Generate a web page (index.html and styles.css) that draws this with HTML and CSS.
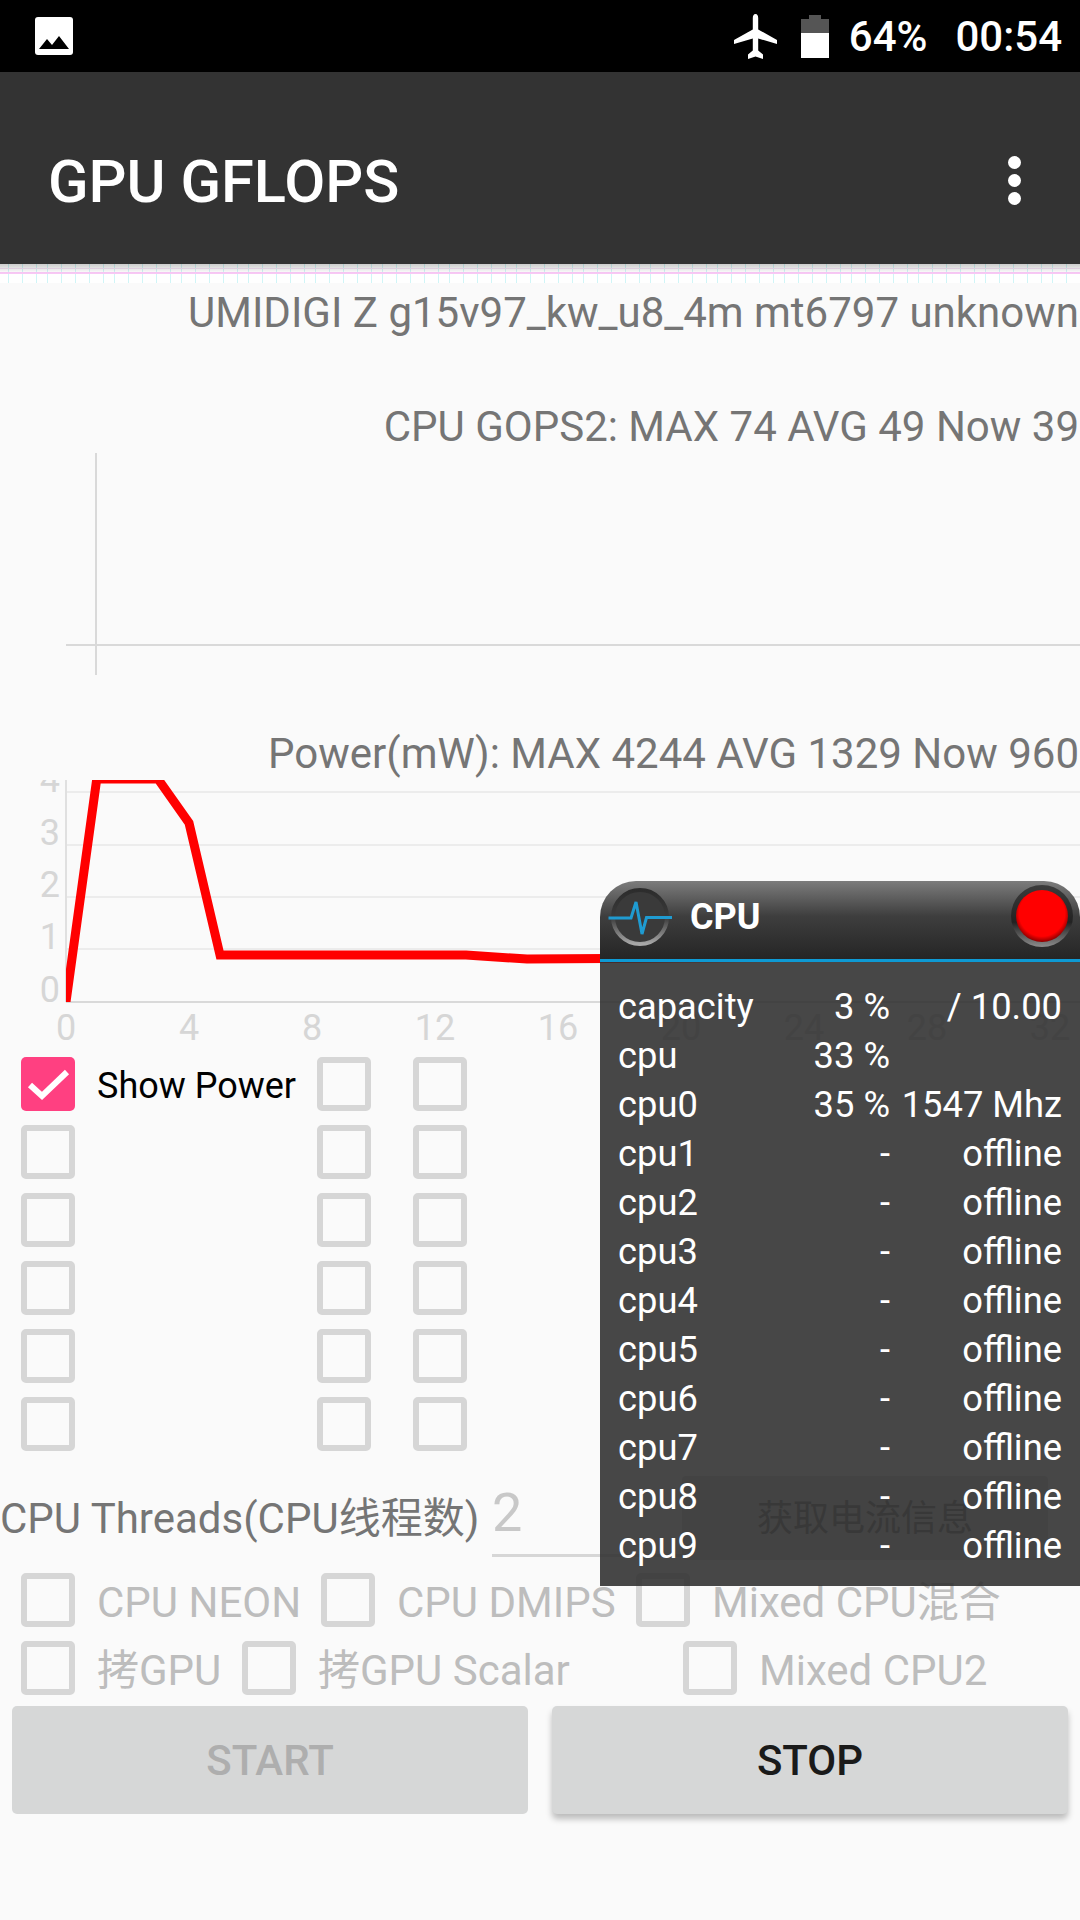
FILE: index.html
```html
<!DOCTYPE html>
<html lang="zh-CN">
<head>
    <meta charset="UTF-8">
    <meta name="viewport" content="width=device-width, initial-scale=1.0">
    <title>GPU GFLOPS</title>
    <link rel="stylesheet" href="styles.css">
</head>
<body>
    <div class="statusbar">
        <svg class="icon-picture" width="38" height="38" viewBox="0 0 38 38">
            <rect width="38" height="38" rx="3" fill="#fff"/>
            <path d="M4 32 L12 22 L17 28 L24 19 L34 32 Z" fill="#000"/>
        </svg>
        <div class="status-right">
            <svg class="icon-plane" width="43" height="45" viewBox="0 0 43 45">
                <path d="M21.5 0 C19.6 0 18.8 2 18.8 4 L18.8 15.5 L0 26 L0 30 L18.8 24.5 L18.8 36.5 L14 40.5 L14 45 L21.5 42.5 L29 45 L29 40.5 L24.2 36.5 L24.2 24.5 L43 30 L43 26 L24.2 15.5 L24.2 4 C24.2 2 23.4 0 21.5 0 Z" fill="#fff"/>
            </svg>
            <svg class="icon-battery" width="28" height="43" viewBox="0 0 28 43">
                <path d="M8 0 H20 V4 H28 V18 H0 V4 H8 Z" fill="#555"/>
                <rect y="18" width="28" height="25" fill="#fff"/>
            </svg>
            <span class="status-pct">64%</span>
            <span class="status-time">00:54</span>
        </div>
    </div>

    <div class="appbar">
        <span class="app-title">GPU GFLOPS</span>
        <div class="menu-dots"><i></i><i></i><i></i></div>
    </div>
    <div class="hatch"></div>

    <p class="device-line">UMIDIGI Z g15v97_kw_u8_4m mt6797 unknown</p>
    <p class="chart-title cpu-title">CPU GOPS2: MAX 74 AVG 49 Now 39</p>
    <svg class="chart-cpu" width="1080" height="222" viewBox="0 0 1080 222">
        <line x1="96" y1="0" x2="96" y2="222" stroke="#d9d9d9" stroke-width="2"/>
        <line x1="66" y1="192" x2="1080" y2="192" stroke="#d9d9d9" stroke-width="2"/>
    </svg>
    <p class="chart-title power-title">Power(mW): MAX 4244 AVG 1329 Now 960</p>
    <svg class="chart-power" width="1080" height="264" viewBox="0 0 1080 264">
        <defs>
            <clipPath id="plotArea"><rect x="66" y="0" width="1014" height="222"/></clipPath>
        </defs>
        <g stroke="#ececec" stroke-width="2">
            <line x1="66" y1="12" x2="1080" y2="12"/>
            <line x1="66" y1="65" x2="1080" y2="65"/>
            <line x1="66" y1="117" x2="1080" y2="117"/>
            <line x1="66" y1="169" x2="1080" y2="169"/>
        </g>
        <line x1="66" y1="0" x2="66" y2="222" stroke="#e0e0e0" stroke-width="2"/>
        <line x1="66" y1="222" x2="1080" y2="222" stroke="#d9d9d9" stroke-width="2"/>
        <g class="axis-label" text-anchor="end">
            <text x="60" y="12">4</text>
            <text x="60" y="65">3</text>
            <text x="60" y="117">2</text>
            <text x="60" y="169">1</text>
            <text x="60" y="222">0</text>
        </g>
        <g class="axis-label" text-anchor="middle">
            <text x="66" y="260">0</text>
            <text x="189" y="260">4</text>
            <text x="312" y="260">8</text>
            <text x="435" y="260">12</text>
            <text x="558" y="260">16</text>
            <text x="681" y="260">20</text>
            <text x="804" y="260">24</text>
            <text x="927" y="260">28</text>
            <text x="1050" y="260">32</text>
        </g>
        <polyline clip-path="url(#plotArea)" points="66,222 96.75,-1 158,-1 189,43 220,175 466,175 527,179 776,177.5 1080,177" fill="none" stroke="#ff0000" stroke-width="9"/>
    </svg>

    <div class="check-grid">
        <label class="check-item">
            <span class="box box-on">
                <svg width="54" height="54" viewBox="0 0 54 54"><path d="M9 28 L21 39 L46 15" fill="none" stroke="#fff" stroke-width="6"/></svg>
            </span>
            <span class="check-text">Show Power</span>
        </label>
        <span class="box"></span><span class="box"></span>
        <span class="box"></span><span class="box"></span><span class="box"></span>
        <span class="box"></span><span class="box"></span><span class="box"></span>
        <span class="box"></span><span class="box"></span><span class="box"></span>
        <span class="box"></span><span class="box"></span><span class="box"></span>
        <span class="box"></span><span class="box"></span><span class="box"></span>
    </div>

    <div class="threads-row">
        <span class="threads-label">CPU Threads(CPU线程数)</span>
        <span class="threads-input">2</span>
        <span class="current-btn">获取电流信息</span>
    </div>

    <div class="opts opts-a">
        <label class="check-item"><span class="box"></span><span class="opt-text">CPU NEON</span></label>
        <label class="check-item"><span class="box"></span><span class="opt-text">CPU DMIPS</span></label>
        <label class="check-item"><span class="box"></span><span class="opt-text">Mixed CPU混合</span></label>
    </div>
    <div class="opts opts-b">
        <label class="check-item"><span class="box"></span><span class="opt-text">拷GPU</span></label>
        <label class="check-item"><span class="box"></span><span class="opt-text">拷GPU Scalar</span></label>
        <label class="check-item"><span class="box"></span><span class="opt-text">Mixed CPU2</span></label>
    </div>

    <div class="actions">
        <button class="btn btn-off">START</button>
        <button class="btn btn-on">STOP</button>
    </div>

    <div class="cpu-panel">
        <div class="panel-head">
            <svg class="panel-gauge" width="72" height="72" viewBox="0 0 72 72">
                <defs>
                    <linearGradient id="ringGrad" x1="0" y1="0" x2="0" y2="1">
                        <stop offset="0" stop-color="#2c2c2c"/>
                        <stop offset="0.5" stop-color="#3a3a3a"/>
                        <stop offset="1" stop-color="#a8a8a8"/>
                    </linearGradient>
                </defs>
                <circle cx="36" cy="36" r="27" fill="#3a3a3a" stroke="url(#ringGrad)" stroke-width="4"/>
                <polyline points="4.5,37 27,37 32,21 38,53 42.5,36.5 68,36.5" fill="none" stroke="#1f9bd1" stroke-width="3"/>
            </svg>
            <span class="panel-title">CPU</span>
            <svg class="panel-close" width="72" height="72" viewBox="0 0 72 72">
                <defs>
                    <linearGradient id="closeRing" x1="0" y1="0" x2="0" y2="1">
                        <stop offset="0" stop-color="#3c3c3c"/>
                        <stop offset="0.6" stop-color="#222"/>
                        <stop offset="1" stop-color="#8c8c8c"/>
                    </linearGradient>
                    <radialGradient id="closeFill" cx="0.5" cy="0.45" r="0.55">
                        <stop offset="0.8" stop-color="#ff0000"/>
                        <stop offset="1" stop-color="#8a0000"/>
                    </radialGradient>
                </defs>
                <circle cx="36" cy="36" r="31" fill="url(#closeRing)"/>
                <circle cx="36" cy="36" r="26" fill="url(#closeFill)"/>
            </svg>
        </div>
        <div class="panel-body">
            <div class="cpu-row"><span>capacity</span><span>3 %</span><span>/ 10.00</span></div>
            <div class="cpu-row"><span>cpu</span><span>33 %</span><span></span></div>
            <div class="cpu-row"><span>cpu0</span><span>35 %</span><span>1547 Mhz</span></div>
            <div class="cpu-row"><span>cpu1</span><span>-</span><span>offline</span></div>
            <div class="cpu-row"><span>cpu2</span><span>-</span><span>offline</span></div>
            <div class="cpu-row"><span>cpu3</span><span>-</span><span>offline</span></div>
            <div class="cpu-row"><span>cpu4</span><span>-</span><span>offline</span></div>
            <div class="cpu-row"><span>cpu5</span><span>-</span><span>offline</span></div>
            <div class="cpu-row"><span>cpu6</span><span>-</span><span>offline</span></div>
            <div class="cpu-row"><span>cpu7</span><span>-</span><span>offline</span></div>
            <div class="cpu-row"><span>cpu8</span><span>-</span><span>offline</span></div>
            <div class="cpu-row"><span>cpu9</span><span>-</span><span>offline</span></div>
        </div>
    </div>
</body>
</html>
```

FILE: styles.css
```css
* {
    margin: 0;
    padding: 0;
    box-sizing: border-box;
}

body {
    position: relative;
    width: 1080px;
    height: 1920px;
    overflow: hidden;
    background-color: #fafafa;
    font-family: Roboto, "Noto Sans CJK SC", sans-serif;
    font-size: 42px;
    color: #757575;
}

svg {
    display: block;
}

/* status bar */
.statusbar {
    height: 72px;
    background-color: #000;
    display: flex;
    align-items: center;
    justify-content: space-between;
    padding-left: 35px;
    padding-right: 18px;
    color: #fff;
}

.status-right {
    display: flex;
    align-items: center;
    font-size: 42px;
    font-weight: 500;
}

.icon-plane { margin-right: 24px; }
.icon-battery { margin-right: 20px; }
.status-pct { margin-right: 28px; }

/* app bar */
.appbar {
    height: 192px;
    background-color: #333;
    display: flex;
    align-items: center;
    justify-content: space-between;
    padding-top: 28px;
    padding-left: 48px;
    padding-right: 59px;
    color: #fff;
}

.app-title {
    font-size: 59.6px;
    font-weight: 500;
}

.menu-dots {
    display: flex;
    flex-direction: column;
    gap: 5px;
    margin-top: -3px;
}

.menu-dots i {
    display: block;
    width: 13px;
    height: 13px;
    border-radius: 50%;
    background-color: #fff;
}

.hatch {
    height: 19px;
    background-color: #fff;
    background-image:
        linear-gradient(to bottom, rgba(0, 0, 0, 0.2), rgba(0, 0, 0, 0) 9px),
        linear-gradient(to bottom, transparent 4px, #f6e4f7 4px, #f6e4f7 5px, transparent 5px, transparent 8px, #f8c8f5 8px, #f8c8f5 10px, transparent 10px),
        linear-gradient(to right, transparent 8px, #d0f5f7 8px, #d0f5f7 9px, transparent 9px, transparent 22px, #d0f5f7 22px, #d0f5f7 23px, transparent 23px, transparent 36px, #d0f5f7 36px, #d0f5f7 37px, transparent 37px, transparent 47px, #d0f5f7 47px, #d0f5f7 48px, transparent 48px, transparent 61px, #d0f5f7 61px, #d0f5f7 62px, transparent 62px);
    background-size: 100% 100%, 100% 100%, 67px 100%;
}

/* charts */
.device-line,
.chart-title {
    line-height: 48px;
    text-align: right;
    white-space: nowrap;
    padding-right: 1px;
}

.device-line { margin-top: 6px; }
.cpu-title { margin-top: 66px; }
.power-title { margin-top: 55px; }

.chart-cpu { margin-top: 2px; }
.chart-power { margin-top: 2px; }

.axis-label {
    font-size: 36px;
    fill: #d6d6d6;
}

/* checkboxes */
.box {
    display: block;
    flex: none;
    width: 54px;
    height: 54px;
    border: 6px solid #d6d6d6;
    border-radius: 5px;
}

.box-on {
    border: none;
    background-color: #ff4081;
}

.check-grid {
    display: grid;
    grid-template-columns: 296px 96px 54px;
    grid-auto-rows: 54px;
    row-gap: 14px;
    padding-left: 21px;
    margin-top: 13px;
}

.check-item {
    display: flex;
    align-items: center;
    gap: 22px;
    white-space: nowrap;
}

.check-text {
    color: #000;
    font-size: 36px;
    padding-top: 3px;
}

.opt-text {
    color: #bdbdbd;
    line-height: 48px;
    padding-top: 5px;
}

/* threads row */
.threads-row {
    display: flex;
    align-items: center;
    height: 84px;
    margin-top: 25px;
}

.threads-label {
    width: 492px;
    line-height: 48px;
    white-space: nowrap;
    margin-top: 1px;
}

.threads-input {
    width: 190px;
    height: 78px;
    margin-bottom: 1px;
    font-size: 54px;
    line-height: 68px;
    color: #c8c8c8;
    border-bottom: 3px solid #d6d6d6;
}

.current-btn {
    width: 366px;
    height: 84px;
    line-height: 87px;
    font-size: 36px;
    text-align: center;
    background-color: #d6d7d7;
    border-radius: 4px;
}

/* option rows */
.opts {
    display: grid;
    grid-auto-rows: 54px;
    padding-left: 21px;
}

.opts-a {
    grid-template-columns: 300px 315px auto;
    margin-top: 13px;
}

.opts-b {
    grid-template-columns: 221px 441px auto;
    margin-top: 14px;
}

/* buttons */
.actions {
    display: flex;
    gap: 24px;
    padding-left: 12px;
    margin-top: 11px;
}

.btn {
    width: 516px;
    height: 108px;
    border: none;
    border-radius: 5px;
    background-color: #d6d7d7;
    font-family: Roboto, sans-serif;
    font-size: 42px;
    font-weight: 500;
}

.btn-off { color: #aeaeae; }

.btn-on {
    color: #1a1a1a;
    box-shadow: 0 5px 6px rgba(0, 0, 0, 0.25);
}

/* floating cpu monitor */
.cpu-panel {
    position: absolute;
    left: 600px;
    top: 881px;
    width: 480px;
    height: 705px;
    color: #fff;
    border-radius: 36px 36px 0 0;
    overflow: hidden;
}

.panel-head {
    position: relative;
    height: 81px;
    display: flex;
    align-items: center;
    background: linear-gradient(to bottom, #7c7c7c 0, #3e3e3e 45%, #252525 100%);
    border-bottom: 3px solid #0e9ad4;
    padding-left: 90px;
    padding-bottom: 6px;
}

.panel-gauge {
    position: absolute;
    left: 4px;
    top: 0;
}

.panel-close {
    position: absolute;
    right: 2px;
    top: -1px;
}

.panel-title {
    font-size: 36px;
    font-weight: 700;
}

.panel-body {
    height: 624px;
    padding-top: 20px;
    background-color: rgba(48, 48, 48, 0.89);
}

.cpu-row {
    display: grid;
    grid-template-columns: 120px 152px 172px;
    padding-left: 18px;
    font-size: 36.3px;
    line-height: 49px;
    white-space: nowrap;
}

.cpu-row span:nth-child(2),
.cpu-row span:nth-child(3) {
    text-align: right;
}
```
